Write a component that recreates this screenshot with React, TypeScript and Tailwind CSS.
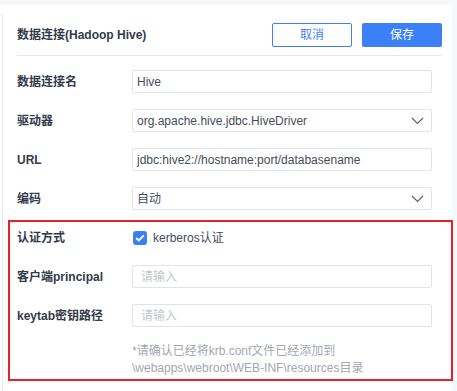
import React from 'react';

const font = { fontFamily: '"Liberation Sans", "Noto Sans CJK SC", sans-serif' };

const Chevron: React.FC = () => (
  <svg width="13" height="8" viewBox="0 0 13 8" fill="none" className="shrink-0">
    <polyline points="1,1 6.5,6.5 12,1" stroke="#5b6270" strokeWidth="1.2" />
  </svg>
);

const Row: React.FC<{ label: string; children: React.ReactNode }> = ({ label, children }) => (
  <div className="flex items-center h-[23px]">
    <div className="w-[115px] text-[12px] font-bold text-[#333b4b]">{label}</div>
    {children}
  </div>
);

const Field: React.FC<{ value?: string; placeholder?: string; select?: boolean }> = ({ value, placeholder, select }) => (
  <div className="w-[300px] h-[23px] border border-[#e1e4e9] rounded-[2px] flex items-center justify-between text-[12px] pr-[7px]">
    {value ? (
      <span className="pl-[4px] text-[#454c5a]">{value}</span>
    ) : (
      <span className="pl-[8px] text-[#c3c7ce]">{placeholder}</span>
    )}
    {select && <Chevron />}
  </div>
);

const App: React.FC = () => {
  return (
    <div className="w-[457px] h-[391px] bg-[#f7f8fa] pt-[5px] overflow-hidden" style={font}>
      <div className="w-[452px] h-full bg-white pl-[2px] pt-[9px]">
        <div className="h-full border-l border-[#e6e8eb] pl-[14px]">
          {/* Header */}
          <div className="w-[425px] flex items-center justify-between pt-[9px] pb-[8px] border-b border-[#e6e8eb]">
            <div className="text-[12px] font-bold text-[#333b4b]">数据连接(Hadoop Hive)</div>
            <div className="flex gap-[10px]">
              <button className="w-[80px] h-[24px] border border-[#3b80f6] rounded-[2px] text-[12px] text-[#3b80f6] bg-white">取消</button>
              <button className="w-[80px] h-[24px] rounded-[2px] text-[12px] text-white bg-[#3b80f6]">保存</button>
            </div>
          </div>

          {/* Form */}
          <div className="flex flex-col gap-[16px] mt-[14px]">
            <Row label="数据连接名"><Field value="Hive" /></Row>
            <Row label="驱动器"><Field value="org.apache.hive.jdbc.HiveDriver" select /></Row>
            <Row label="URL"><Field value="jdbc:hive2://hostname:port/databasename" /></Row>
            <Row label="编码"><Field value="自动" select /></Row>
          </div>

          {/* Kerberos section */}
          <div className="-ml-[9px] mt-[10px] w-[445px] border-2 border-[#e9202b] pl-[7px] pt-[4px] pb-[2px]">
            <div className="flex flex-col gap-[16px]">
              <Row label="认证方式">
                <div className="flex items-center gap-[6px] ml-[1px]">
                  <div className="w-[14px] h-[14px] rounded-[3px] bg-[#3b80f6] flex items-center justify-center">
                    <svg width="10" height="8" viewBox="0 0 10 8" fill="none">
                      <polyline points="1.2,4 3.8,6.4 8.8,1.4" stroke="white" strokeWidth="1.8" />
                    </svg>
                  </div>
                  <span className="text-[12px] text-[#454c5a]">kerberos认证</span>
                </div>
              </Row>
              <Row label="客户端principal"><Field placeholder="请输入" /></Row>
              <Row label="keytab密钥路径"><Field placeholder="请输入" /></Row>
            </div>
            <div className="ml-[115px] mt-[16px] text-[12px] leading-[17px] text-[#a3a7ae]">
              <div>*请确认已经将krb.conf文件已经添加到</div>
              <div>\webapps\webroot\WEB-INF\resources目录</div>
            </div>
          </div>
        </div>
      </div>
    </div>
  );
};

export default App;
